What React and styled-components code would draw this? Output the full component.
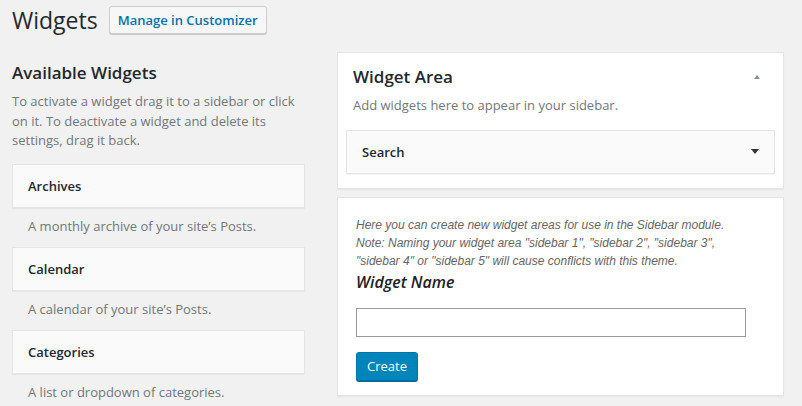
import React from 'react';
import styled, { createGlobalStyle } from 'styled-components';

const GlobalStyle = createGlobalStyle`
  html, body {
    margin: 0;
    padding: 0;
    background: #f1f1f1;
    overflow: hidden;
  }
  body {
    font-family: "Open Sans", "Liberation Sans", sans-serif;
    color: #444;
    font-size: 13px;
  }
`;

const Page = styled.div`
  padding: 6px 0 0 12px;
  width: 790px;
  box-sizing: border-box;
`;

const Header = styled.div`
  display: flex;
  align-items: center;
  gap: 11px;
  height: 28px;
`;

const Title = styled.h1`
  margin: 0;
  font-size: 23px;
  font-weight: 400;
  line-height: 29px;
  color: #23282d;
`;

const HeaderButton = styled.button`
  height: 28px;
  padding: 0 8px;
  font-family: inherit;
  font-size: 13px;
  font-weight: 600;
  color: #0073aa;
  background: #f7f7f7;
  border: 1px solid #ccc;
  border-radius: 3px;
  box-shadow: 0 1px 0 #ccc;
  cursor: pointer;
`;

const Columns = styled.div`
  display: flex;
  gap: 32px;
  margin-top: 18px;
  align-items: flex-start;
`;

const LeftColumn = styled.div`
  width: 293px;
  flex-shrink: 0;
`;

const RightColumn = styled.div`
  width: 447px;
  display: flex;
  flex-direction: column;
  gap: 8px;
`;

const SectionTitle = styled.h2`
  margin: 10px 0 0;
  font-size: 17px;
  font-weight: 600;
  line-height: 22px;
  color: #23282d;
`;

const Intro = styled.p`
  margin: 8px 0 13px;
  font-size: 13px;
  line-height: 19.5px;
  color: #72777c;
`;

const WidgetItem = styled.div``;

const WidgetTop = styled.div`
  display: flex;
  align-items: center;
  justify-content: space-between;
  padding: 12px 15px;
  line-height: 18px;
  background: #fafafa;
  border: 1px solid #e5e5e5;
  box-shadow: 0 1px 1px rgba(0, 0, 0, 0.04);
  font-size: 13px;
  font-weight: 600;
  color: #23282d;
`;

const WidgetDesc = styled.div`
  padding: 9px 16px 10.5px;
  font-size: 13px;
  line-height: 19.5px;
  color: #72777c;
`;

const Panel = styled.div`
  background: #fff;
  border: 1px solid #e5e5e5;
  box-shadow: 0 1px 1px rgba(0, 0, 0, 0.04);
`;

const PanelHead = styled.div`
  display: flex;
  align-items: center;
  justify-content: space-between;
  padding: 13px 23px 0 15px;
`;

const PanelTitle = styled.h2`
  margin: 0;
  font-size: 17px;
  font-weight: 600;
  line-height: 22px;
  color: #23282d;
`;

const PanelDesc = styled.p`
  margin: 8px 15px 14px;
  font-size: 13px;
  line-height: 19.5px;
  color: #72777c;
`;

const WidgetList = styled.div`
  padding: 0 8px 14px;
`;

const Arrow = styled.span`
  width: 0;
  height: 0;
  border-left: ${p => p.$size}px solid transparent;
  border-right: ${p => p.$size}px solid transparent;
  ${p => (p.$up ? 'border-bottom' : 'border-top')}: ${p => p.$size + 1}px solid ${p => p.$color};
`;

const CreatePanel = styled(Panel)`
  padding: 18px 18px 14px;
`;

const Note = styled.p`
  margin: 0;
  font-family: "Liberation Sans", Arial, sans-serif;
  font-style: italic;
  font-size: 12px;
  line-height: 18px;
  color: #666;
`;

const NameLabel = styled.h3`
  margin: 1px 0 0;
  font-size: 16px;
  font-style: italic;
  font-weight: 600;
  line-height: 22px;
  color: #222;
`;

const NameInput = styled.input`
  display: block;
  box-sizing: border-box;
  width: 390px;
  height: 29px;
  margin-top: 15px;
  border: 1px solid #999;
  background: #fff;
  font-family: inherit;
`;

const CreateButton = styled.button`
  margin-top: 15px;
  height: 29px;
  padding: 0 10px;
  font-family: inherit;
  font-size: 13px;
  color: #fff;
  background: #0085ba;
  border: 1px solid #0073aa;
  border-radius: 3px;
  box-shadow: 0 1px 0 #006799;
  cursor: pointer;
`;

const widgets = [
  { name: 'Archives', desc: 'A monthly archive of your site\u2019s Posts.' },
  { name: 'Calendar', desc: 'A calendar of your site\u2019s Posts.' },
  { name: 'Categories', desc: 'A list or dropdown of categories.' },
];

export default function App() {
  return (
    <>
      <GlobalStyle />
      <Page>
        <Header>
          <Title>Widgets</Title>
          <HeaderButton>Manage in Customizer</HeaderButton>
        </Header>

        <Columns>
          <LeftColumn>
            <SectionTitle>Available Widgets</SectionTitle>
            <Intro>
              To activate a widget drag it to a sidebar or click on it. To deactivate a widget and
              delete its settings, drag it back.
            </Intro>
            {widgets.map(w => (
              <WidgetItem key={w.name}>
                <WidgetTop>{w.name}</WidgetTop>
                <WidgetDesc>{w.desc}</WidgetDesc>
              </WidgetItem>
            ))}
          </LeftColumn>

          <RightColumn>
            <Panel>
              <PanelHead>
                <PanelTitle>Widget Area</PanelTitle>
                <Arrow $up $size={3.5} $color="#8c8f94" />
              </PanelHead>
              <PanelDesc>Add widgets here to appear in your sidebar.</PanelDesc>
              <WidgetList>
                <WidgetTop>
                  Search
                  <Arrow $size={4} $color="#333" />
                </WidgetTop>
              </WidgetList>
            </Panel>

            <CreatePanel>
              <Note>
                Here you can create new widget areas for use in the Sidebar module.
                <br />
                Note: Naming your widget area "sidebar 1", "sidebar 2", "sidebar 3",
                <br />
                "sidebar 4" or "sidebar 5" will cause conflicts with this theme.
              </Note>
              <NameLabel>Widget Name</NameLabel>
              <NameInput type="text" />
              <CreateButton>Create</CreateButton>
            </CreatePanel>
          </RightColumn>
        </Columns>
      </Page>
    </>
  );
}
